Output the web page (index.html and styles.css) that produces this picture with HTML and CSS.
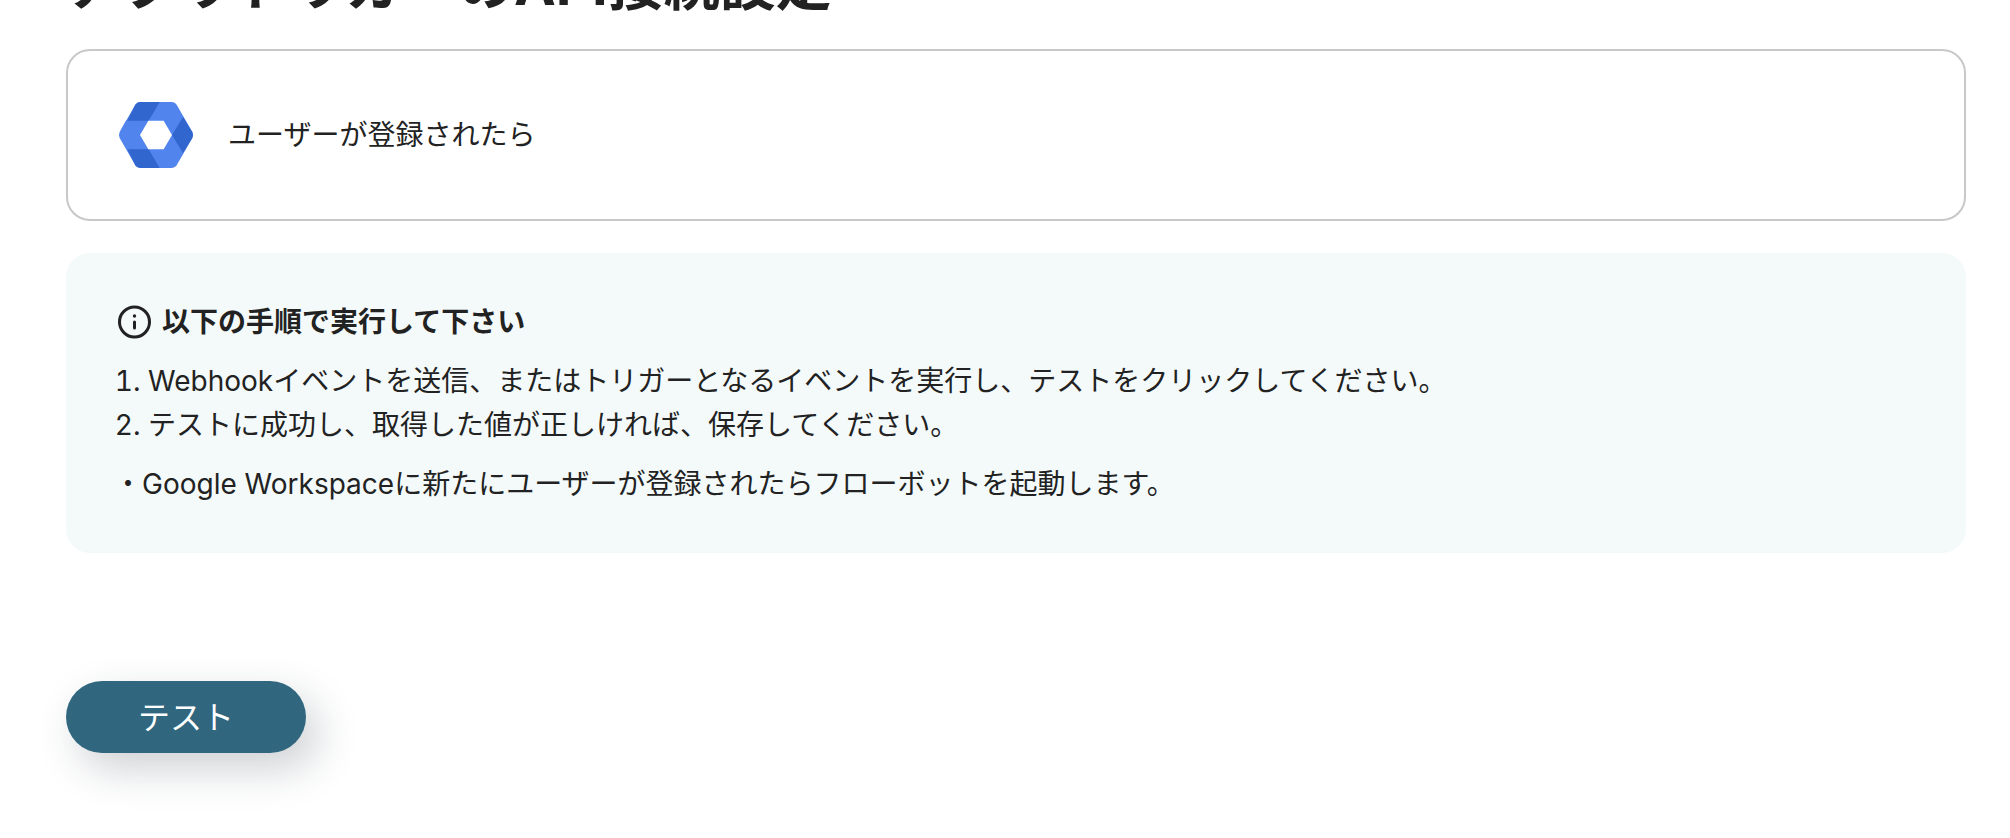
FILE: index.html
```html
<!DOCTYPE html>
<html lang="ja">
<head>
  <meta charset="UTF-8">
  <meta name="viewport" content="width=device-width, initial-scale=1.0">
  <title>アプリトリガーのAPI接続設定</title>
  <link rel="stylesheet" href="styles.css">
</head>
<body>
  <main class="container">
    <h1>アプリトリガーのAPI接続設定</h1>

    <div class="trigger-card">
      <svg class="app-icon" viewBox="48 15 240 240" aria-hidden="true">
        <path fill="#5284ee" d="M120 36h96q9 0 14 8l47 82q4 9 0 18l-47 82q-5 8-14 8h-96q-9 0-14-8l-47-82q-4-9 0-18l47-82q5-8 14-8z"/>
        <path fill="#3066cd" d="M120 36h59l-33 56H82l24-48q5-8 14-8z"/>
        <path fill="#5284ee" d="M59 126l20-35 3 1-4 10z"/>
        <path fill="#3066cd" d="M82 178h64l33 56h-59q-9 0-14-8z"/>
        <path fill="#3066cd" d="M249 81l28 45q4 9 0 18l-28 45-33-54z"/>
        <path fill="#fff" d="M145 92h46l25 43-25 43h-46l-25-43z"/>
      </svg>
      <span>ユーザーが登録されたら</span>
    </div>

    <section class="guide">
      <h2>
        <svg class="info-icon" viewBox="0 0 40 40" aria-hidden="true">
          <circle cx="20.5" cy="20" r="15" fill="none" stroke="#222" stroke-width="3"/>
          <circle cx="20.5" cy="14" r="1.7" fill="#222"/>
          <path d="M20.5 20v6" stroke="#222" stroke-width="3" stroke-linecap="round"/>
        </svg>
        以下の手順で実行して下さい
      </h2>
      <ol>
        <li>Webhookイベントを送信、またはトリガーとなるイベントを実行し、テストをクリックしてください。</li>
        <li>テストに成功し、取得した値が正しければ、保存してください。</li>
      </ol>
      <p>・Google Workspaceに新たにユーザーが登録されたらフローボットを起動します。</p>
    </section>

    <button class="test-button" type="button">テスト</button>
  </main>
</body>
</html>
```

FILE: styles.css
```css
body {
  margin: 0;
  background: #fff;
  color: #222;
  font-family: Inter, "Noto Sans CJK JP", sans-serif;
  font-size: 28px;
  line-height: 44px;
}
.container {
  /* flow-root keeps the heading's negative margin inside */
  display: flow-root;
  padding: 0 44px 80px 66px;
}
h1 {
  margin: -47px 0 32px;
  font-size: 56px;
  line-height: 64px;
  font-weight: bold;
}
.trigger-card {
  display: flex;
  align-items: center;
  gap: 32px;
  padding: 44px 48px;
  border: 2px solid #c8c8c8;
  border-radius: 24px;
}
.app-icon {
  width: 80px;
  height: 80px;
}
.guide {
  margin-top: 32px;
  padding: 47px 48px;
  background: #f4fafa;
  border-radius: 24px;
}
.guide h2 {
  display: flex;
  align-items: center;
  gap: 8px;
  margin: 0;
  font-size: 28px;
  font-weight: bold;
}
.info-icon {
  width: 40px;
  height: 40px;
}
.guide ol {
  margin: 15px 0;
  padding-left: 34px;
}
.guide p {
  margin: 0;
}
.test-button {
  display: block;
  width: 240px;
  height: 72px;
  margin-top: 128px;
  padding: 0 0 4px;
  border: none;
  border-radius: 36px;
  background: #30677f;
  color: #fff;
  font-family: inherit;
  font-size: 32px;
  box-shadow: 12px 16px 40px rgba(34, 44, 60, 0.22);
  cursor: pointer;
}
.test-button:hover {
  background: #28586c;
}
```
